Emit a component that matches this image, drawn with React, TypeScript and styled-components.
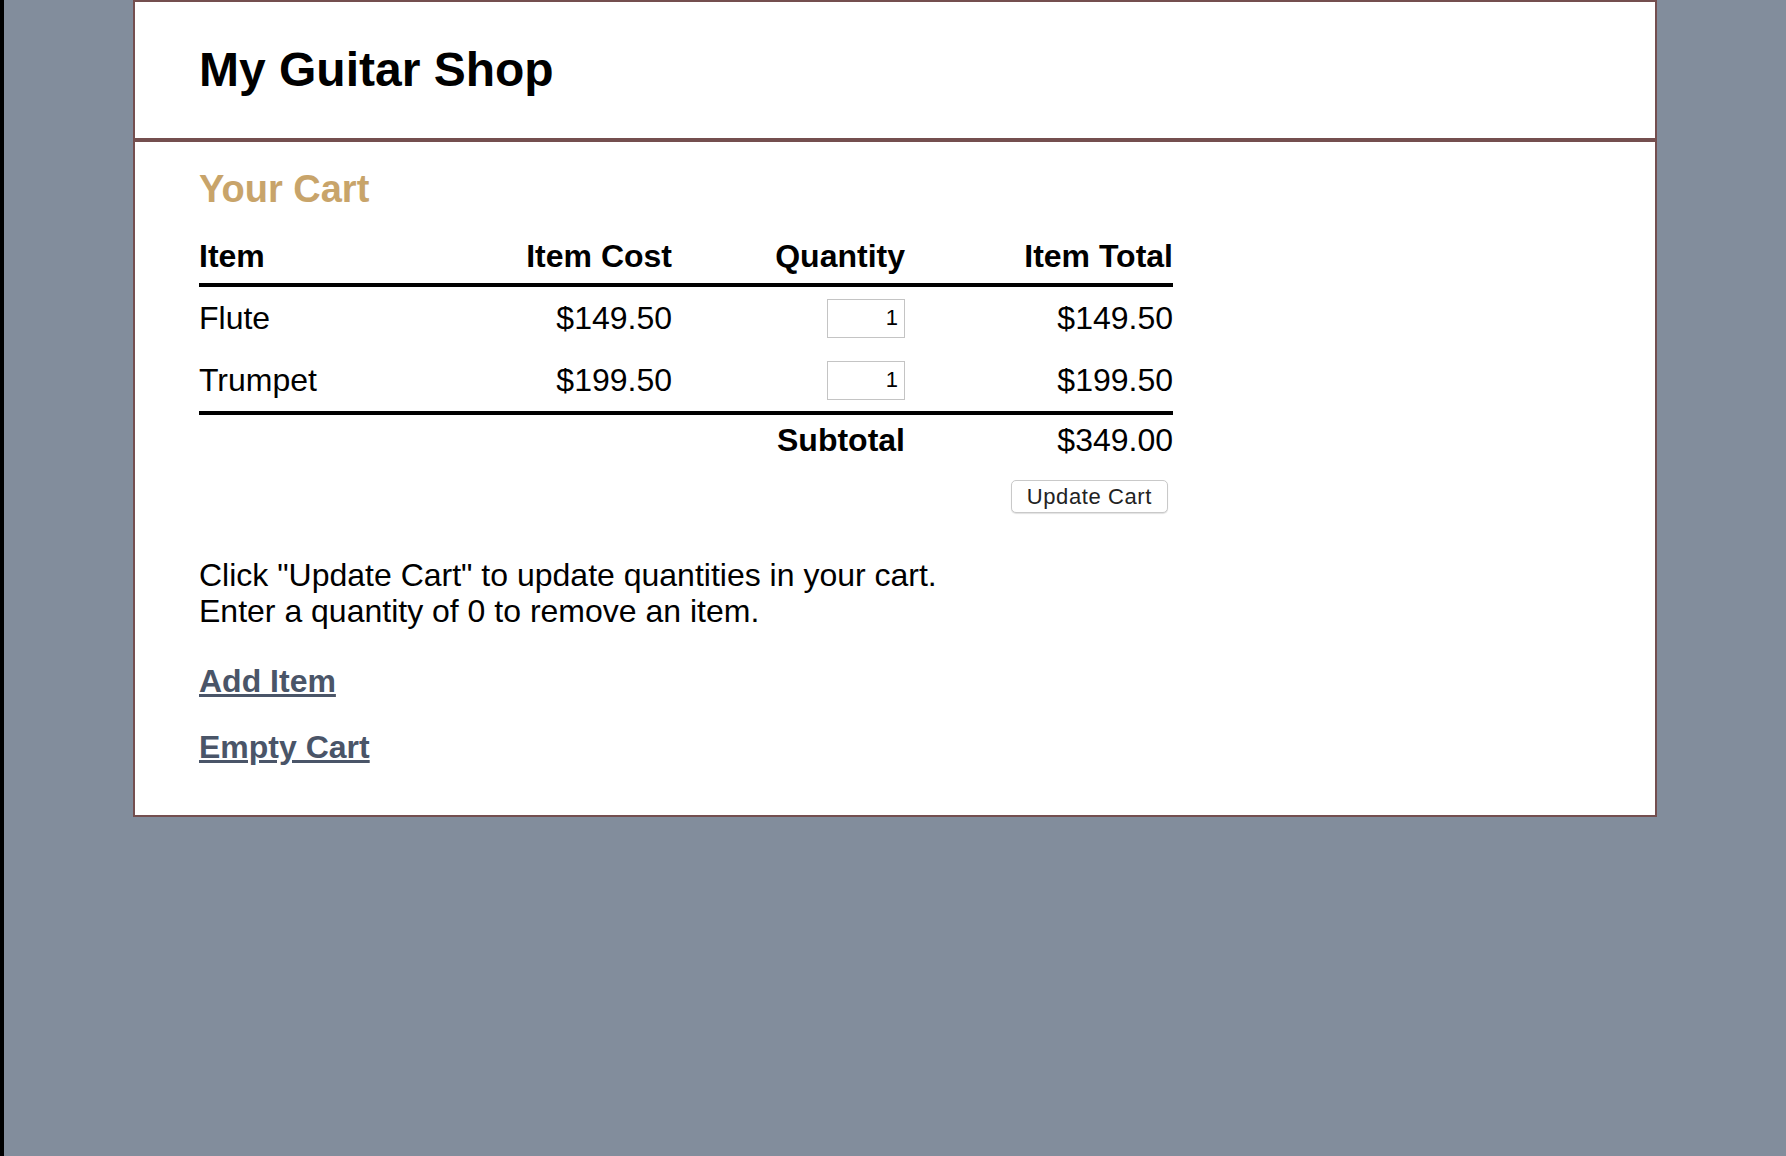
import React from "react";
import styled, { createGlobalStyle } from "styled-components";

interface CartItem {
   id: number;
   name: string;
   cost: number;
   quantity: number;
}

const items: CartItem[] = [
   { id: 1, name: "Flute", cost: 149.5, quantity: 1 },
   { id: 2, name: "Trumpet", cost: 199.5, quantity: 1 },
];

const money = (n: number) => "$" + n.toFixed(2);

function App() {
   const subtotal = items.reduce((sum, i) => sum + i.cost * i.quantity, 0);

   return (
      <>
         <GlobalStyle />
         <Page>
            <Strip />
            <Stage>
               <Box>
                  <Header>
                     <h1>My Guitar Shop</h1>
                  </Header>
                  <Main>
                     <Title>Your Cart</Title>
                     <Row head>
                        <Cell>Item</Cell>
                        <Cell right>Item Cost</Cell>
                        <Cell right>Quantity</Cell>
                        <Cell right>Item Total</Cell>
                     </Row>
                     {items.map((item) => (
                        <ItemRow key={item.id}>
                           <Cell>{item.name}</Cell>
                           <Cell right>{money(item.cost)}</Cell>
                           <Cell right>
                              <QtyInput
                                 type="text"
                                 defaultValue={item.quantity}
                              />
                           </Cell>
                           <Cell right>{money(item.cost * item.quantity)}</Cell>
                        </ItemRow>
                     ))}
                     <Row total>
                        <Cell />
                        <Cell />
                        <Cell right bold>
                           Subtotal
                        </Cell>
                        <Cell right>{money(subtotal)}</Cell>
                     </Row>
                     <ButtonRow>
                        <UpdateButton type="button">Update Cart</UpdateButton>
                     </ButtonRow>
                     <Note>
                        Click "Update Cart" to update quantities in your cart.
                        <br />
                        Enter a quantity of 0 to remove an item.
                     </Note>
                     <LinkLine>
                        <a href="#">Add Item</a>
                     </LinkLine>
                     <LinkLine last>
                        <a href="#">Empty Cart</a>
                     </LinkLine>
                  </Main>
               </Box>
            </Stage>
         </Page>
      </>
   );
}

export default App;

const GlobalStyle = createGlobalStyle`
   html, body {
      margin: 0;
      padding: 0;
   }
   body {
      font-family: "Liberation Sans", Arial, Helvetica, sans-serif;
      font-size: 32px;
      line-height: 36px;
      color: #000;
   }
`;

const Page = styled.div`
   display: flex;
   min-height: 100vh;
`;

const Strip = styled.div`
   width: 4px;
   flex: none;
   background: #000;
`;

const Stage = styled.div`
   flex: 1;
   background: #828d9c;
`;

const Box = styled.div`
   box-sizing: border-box;
   width: 1524px;
   margin: 0 auto;
   background: #fff;
   border: 2px solid #744f4f;
`;

const Header = styled.header`
   padding: 41px 64px 41px;
   border-bottom: 4px solid #744f4f;

   h1 {
      margin: 0;
      font-size: 48px;
      font-weight: bold;
      line-height: 54px;
   }
`;

const Main = styled.main`
   padding: 25px 64px 50px;
`;

const Title = styled.h2`
   margin: 0 0 27px;
   font-size: 38px;
   font-weight: bold;
   line-height: 44px;
   color: #c8a46a;
`;

const Row = styled.div<{ head?: boolean; total?: boolean }>`
   display: grid;
   grid-template-columns: 236px 237px 233px 268px;
   width: 974px;
   align-items: center;
   font-weight: ${(p) => (p.head ? "bold" : "normal")};
   padding-bottom: ${(p) => (p.head ? "9px" : "0")};
   padding-top: ${(p) => (p.total ? "7px" : "0")};
   border-bottom: ${(p) => (p.head ? "4px solid #000" : "none")};
   border-top: ${(p) => (p.total ? "4px solid #000" : "none")};
`;

const ItemRow = styled(Row)`
   height: 62px;
`;

const Cell = styled.div<{ right?: boolean; bold?: boolean }>`
   display: flex;
   justify-content: ${(p) => (p.right ? "flex-end" : "flex-start")};
   font-weight: ${(p) => (p.bold ? "bold" : "inherit")};
   white-space: nowrap;
`;

const QtyInput = styled.input`
   box-sizing: border-box;
   width: 78px;
   height: 39px;
   margin: 0;
   padding: 0 6px;
   border: 1px solid #c4c4c4;
   border-radius: 0;
   font-family: "Liberation Sans", Arial, sans-serif;
   font-size: 22px;
   text-align: right;
   color: #000;
   background: #fff;
   outline: none;
`;

const ButtonRow = styled.div`
   display: flex;
   justify-content: flex-end;
   width: 974px;
   margin-top: 22px;
`;

const UpdateButton = styled.button`
   box-sizing: border-box;
   height: 33px;
   margin-right: 5px;
   padding: 0 15px;
   background: #fff;
   border: 1px solid #c9c9c9;
   border-radius: 5px;
   box-shadow: 0 1px 1px rgba(0, 0, 0, 0.12);
   font-family: "Liberation Sans", Arial, sans-serif;
   font-size: 22px;
   letter-spacing: 0.6px;
   color: #222;
   cursor: pointer;
`;

const Note = styled.p`
   margin: 44px 0 0;
`;

const LinkLine = styled.p<{ last?: boolean }>`
   margin: ${(p) => (p.last ? "30.6px 0 0" : "33.6px 0 0")};

   a {
      color: #4a5568;
      font-weight: bold;
      text-decoration: underline;
   }
`;
